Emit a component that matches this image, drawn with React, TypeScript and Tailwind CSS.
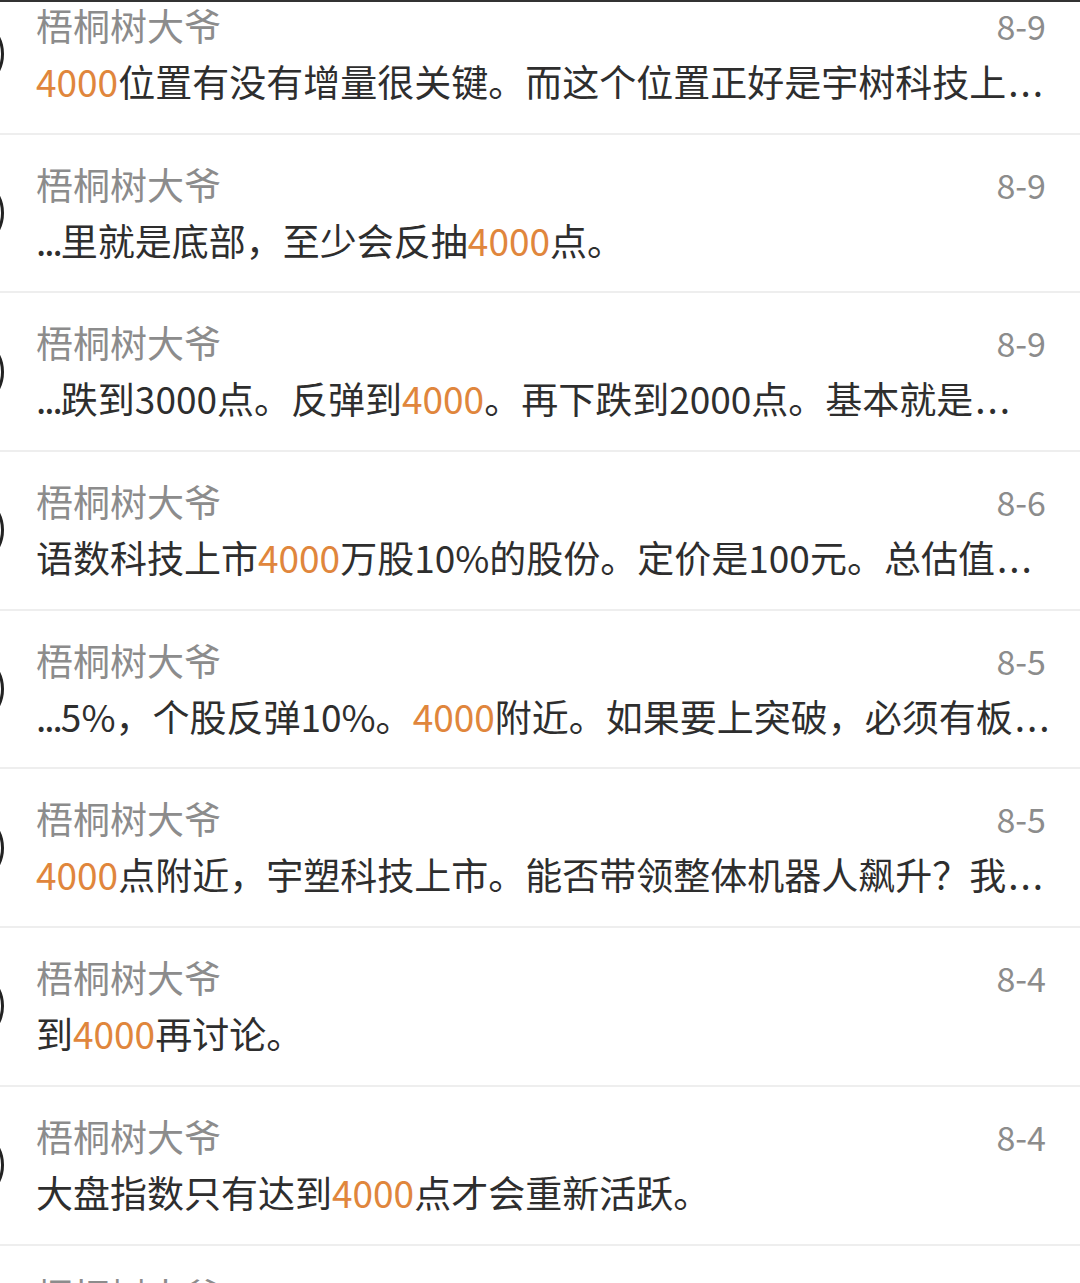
const font = { fontFamily: '"Noto Sans CJK SC", "Noto Sans", sans-serif' };

type Item = { date: string; lead?: boolean; tail?: boolean; parts: [string, string, string] };

const items: Item[] = [
  { date: "8-9", tail: true, parts: ["", "4000", "位置有没有增量很关键。而这个位置正好是宇树科技上"] },
  { date: "8-9", lead: true, parts: ["里就是底部，至少会反抽", "4000", "点。"] },
  { date: "8-9", lead: true, tail: true, parts: ["跌到3000点。反弹到", "4000", "。再下跌到2000点。基本就是"] },
  { date: "8-6", tail: true, parts: ["语数科技上市", "4000", "万股10%的股份。定价是100元。总估值"] },
  { date: "8-5", lead: true, tail: true, parts: ["5%，个股反弹10%。", "4000", "附近。如果要上突破，必须有板"] },
  { date: "8-5", tail: true, parts: ["", "4000", "点附近，宇塑科技上市。能否带领整体机器人飙升？我"] },
  { date: "8-4", parts: ["到", "4000", "再讨论。"] },
  { date: "8-4", parts: ["大盘指数只有达到", "4000", "点才会重新活跃。"] },
  { date: "8-3", parts: ["", "", ""] },
];

function Row({ item }: { item: Item }) {
  const [before, hit, after] = item.parts;
  return (
    <div className="relative flex h-[158.7px] shrink-0 items-center border-b-2 border-[#eeeeee]">
      <div className="-ml-[72px] mr-[32px] h-[76px] w-[76px] shrink-0 rounded-full border-[3px] border-[#222]" />
      <div className="flex min-w-0 flex-1 flex-col self-start pt-[31px] pr-[34px]">
        <div className="flex items-center justify-between">
          <span className="text-[37px] leading-[37px] text-[#8c8c8c]">梧桐树大爷</span>
          <span className="text-[34px] leading-[37px] text-[#8c8c8c]">{item.date}</span>
        </div>
        <div className="mt-[19px] whitespace-nowrap text-[37px] leading-[37px] text-[#2e2e2e]">
          {item.lead && <span className="tracking-[-2px]">...</span>}
          {before}
          <span className="text-[#e0863c]">{hit}</span>
          {after}
          {item.tail && <span className="pl-[2px] tracking-[2px]">...</span>}
        </div>
      </div>
    </div>
  );
}

export default function App() {
  return (
    <div className="relative h-[1283px] w-[1080px] overflow-hidden bg-white" style={font}>
      <div className="relative z-10 h-[2px] w-full bg-[#333]" />
      <div className="-mt-[26px] flex flex-col">
        {items.map((item, i) => (
          <Row key={i} item={item} />
        ))}
      </div>
    </div>
  );
}
